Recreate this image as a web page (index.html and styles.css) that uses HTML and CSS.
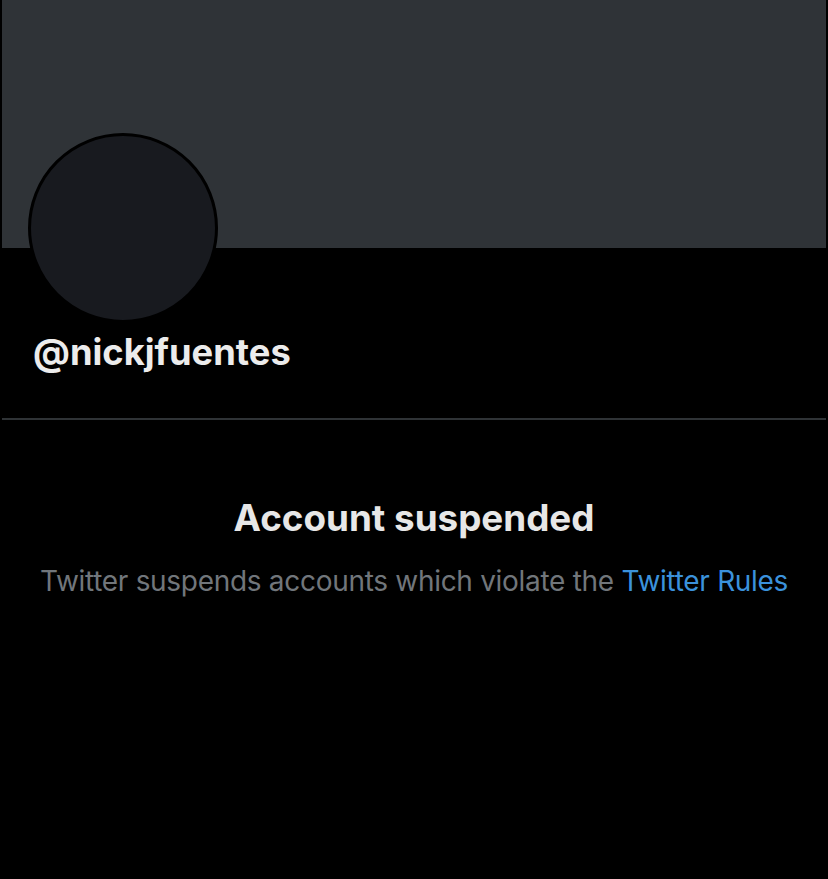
FILE: index.html
```html
<!DOCTYPE html>
<html>
<head>
<meta charset="utf-8">
<link rel="stylesheet" href="styles.css">
</head>
<body>
<div class="page">
  <div class="banner-wrap"><div class="banner"></div></div>
  <div class="profile">
    <div class="avatar"></div>
    <div class="handle">@nickjfuentes</div>
  </div>
  <div class="divider"></div>
  <div class="notice">
    <h1 class="title">Account suspended</h1>
    <p class="desc">Twitter suspends accounts which violate the <span class="link">Twitter Rules</span></p>
  </div>
</div>
</body>
</html>
```
FILE: styles.css
```css
html, body {
  margin: 0;
  padding: 0;
  background: #000;
}
body {
  font-family: Inter, "Liberation Sans", Arial, sans-serif;
  width: 828px;
  height: 879px;
  overflow: hidden;
}
.page {
  display: flex;
  flex-direction: column;
}
.banner-wrap {
  padding: 0 2px 0 2px;
}
.banner {
  height: 248px;
  background: #2f3337;
}
.profile {
  padding-left: 28px;
  margin-top: -115px;
  position: relative;
}
.avatar {
  width: 184px;
  height: 184px;
  border-radius: 50%;
  background: #181a1f;
  border: 3px solid #000;
}
.handle {
  margin-top: 6px;
  margin-left: 5px;
  color: #ececec;
  font-weight: bold;
  font-size: 36.3px;
  line-height: 46px;
}
.divider {
  margin: 43px 2px 0 2px;
  height: 2px;
  background: #2f3336;
}
.notice {
  display: flex;
  flex-direction: column;
  align-items: center;
  text-align: center;
}
.title {
  margin: 76px 0 0 0;
  color: #e7e7e7;
  font-weight: bold;
  font-size: 36.8px;
  line-height: 44px;
}
.desc {
  margin: 24px 0 0 0;
  color: #71767b;
  font-size: 28px;
  letter-spacing: -0.3px;
  line-height: 34px;
}
.link {
  color: #3b92dc;
}
```
